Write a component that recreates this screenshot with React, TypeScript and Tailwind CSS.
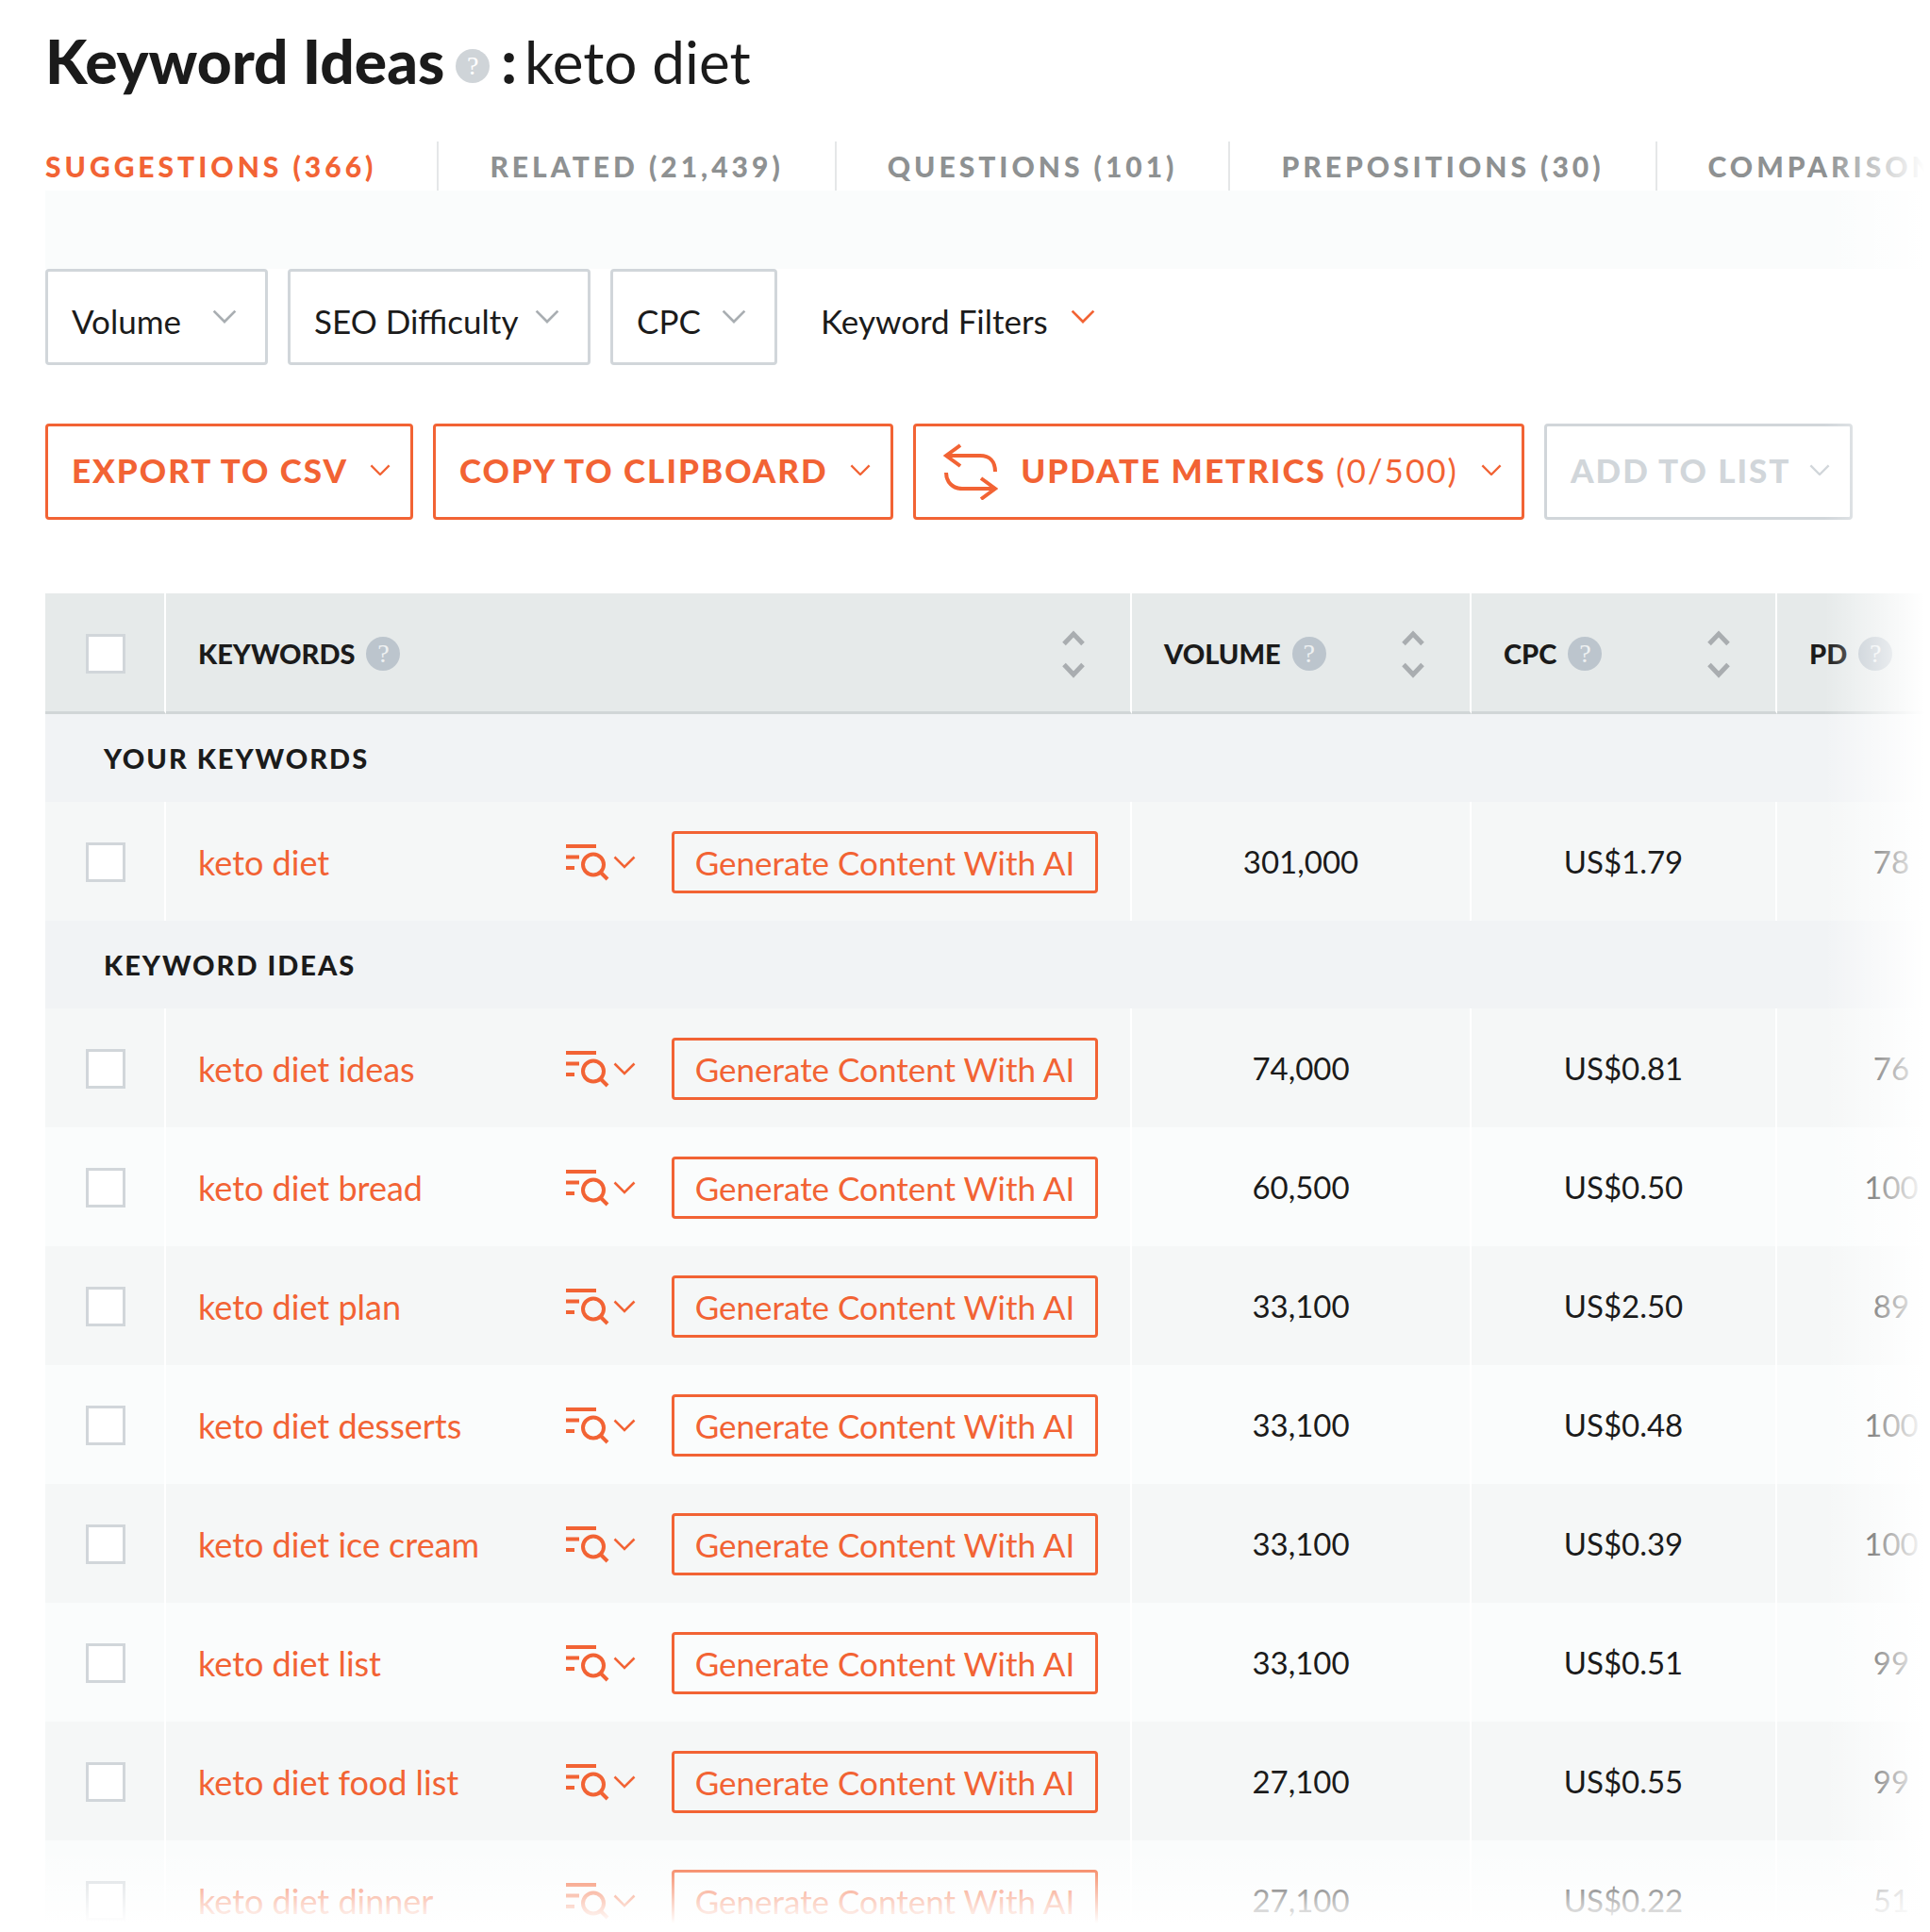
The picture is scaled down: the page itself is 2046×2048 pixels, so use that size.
import React, { useState } from 'react';

interface Keyword {
  keyword: string;
  volume: string;
  cpc: string;
  pd: number;
}

interface KeywordGroup {
  title: string;
  items: Keyword[];
}

const tabs = [
  'SUGGESTIONS (366)',
  'RELATED (21,439)',
  'QUESTIONS (101)',
  'PREPOSITIONS (30)',
  'COMPARISONS',
];

const filters = [
  { label: 'Volume', width: 'w-[236px]' },
  { label: 'SEO Difficulty', width: 'w-[321px]' },
  { label: 'CPC', width: 'w-[177px]' },
];

const groups: KeywordGroup[] = [
  {
    title: 'YOUR KEYWORDS',
    items: [{ keyword: 'keto diet', volume: '301,000', cpc: 'US$1.79', pd: 78 }],
  },
  {
    title: 'KEYWORD IDEAS',
    items: [
      { keyword: 'keto diet ideas', volume: '74,000', cpc: 'US$0.81', pd: 76 },
      { keyword: 'keto diet bread', volume: '60,500', cpc: 'US$0.50', pd: 100 },
      { keyword: 'keto diet plan', volume: '33,100', cpc: 'US$2.50', pd: 89 },
      { keyword: 'keto diet desserts', volume: '33,100', cpc: 'US$0.48', pd: 100 },
      { keyword: 'keto diet ice cream', volume: '33,100', cpc: 'US$0.39', pd: 100 },
      { keyword: 'keto diet list', volume: '33,100', cpc: 'US$0.51', pd: 99 },
      { keyword: 'keto diet food list', volume: '27,100', cpc: 'US$0.55', pd: 99 },
      { keyword: 'keto diet dinner', volume: '27,100', cpc: 'US$0.22', pd: 51 },
    ],
  },
];

const Chevron = ({ className = '' }: { className?: string }) => (
  <svg viewBox="0 0 24 14" fill="none" stroke="currentColor" strokeWidth="2.5" className={`shrink-0 ${className}`} aria-hidden="true">
    <path d="M1.5 1.5 12 12 22.5 1.5" />
  </svg>
);

const RefreshIcon = () => (
  <svg viewBox="0 0 58 60" fill="none" stroke="currentColor" strokeWidth="4" className="mt-1 ml-1 h-[60px] w-[58px] shrink-0" aria-hidden="true">
    <path d="M3 13h36c10 0 16 6 16 17" />
    <path d="M18 2 3 13l15 11" />
    <path d="M3 31c0 10 7 17 17 17h35" />
    <path d="M40 37l15 11-15 11" />
  </svg>
);

const SerpIcon = () => (
  <svg viewBox="0 0 46 40" fill="none" stroke="currentColor" strokeWidth="4" className="h-10 w-[46px] shrink-0" aria-hidden="true">
    <path d="M0 3h32M0 14.500h14M0 26h9" />
    <circle cx="29" cy="22.500" r="11" />
    <path d="M36.500 30.500 44 38" />
  </svg>
);

const SortIcon = () => (
  <svg viewBox="0 0 24 52" fill="none" stroke="currentColor" strokeWidth="5" className="h-[52px] w-6" aria-hidden="true">
    <path d="M2 15.500 12 5l10 10.500M2 37.500 12 48l10-10.500" />
  </svg>
);

const Help = ({ className = '' }: { className?: string }) => (
  <span className={`flex size-9 shrink-0 items-center justify-center rounded-full font-['Liberation_Serif',serif] text-[28px] leading-9 font-normal ${className}`}>
    ?
  </span>
);

const HeaderCell = ({ label, className = '' }: { label: string; className?: string }) => (
  <th scope="col" className={`border-r-2 border-white px-[34px] ${className}`}>
    <div className="flex items-center">
      <span className="text-[29px] font-black text-[#1b1b1b]">{label}</span>
      <Help className="ml-3 bg-[#bcc5cd] text-[#eef1f2]" />
      <button type="button" aria-label={`Sort by ${label}`} className="mr-3.5 ml-auto text-[#a9adb0]">
        <SortIcon />
      </button>
    </div>
  </th>
);

const Checkbox = ({ label }: { label: string }) => (
  <input
    type="checkbox"
    aria-label={label}
    className="mx-auto block size-[42px] appearance-none border-3 border-[#d1d6da] bg-white checked:bg-[#f26334]"
  />
);

const KeywordRow = ({ item, striped }: { item: Keyword; striped: boolean }) => (
  <tr className={`h-[126px] text-[33px] text-[#1b1b1b] [&>td]:pt-0.5 ${striped ? 'bg-[#f5f7f7]' : 'bg-[#fafcfc]'}`}>
    <td className="border-r-2 border-white pl-0.5">
      <Checkbox label={`Select ${item.keyword}`} />
    </td>
    <td className="border-r-2 border-white px-[34px]">
      <div className="flex items-center text-[#f26334]">
        <a href="#" className="text-[36px] leading-10">{item.keyword}</a>
        <button type="button" aria-label="Open search results" className="ml-auto flex items-center gap-1">
          <SerpIcon />
          <Chevron className="w-6" />
        </button>
        <button type="button" className="ml-[38px] h-[66px] w-[452px] rounded-sm border-3 text-[35px] leading-10">
          Generate Content With AI
        </button>
      </div>
    </td>
    <td className="border-r-2 border-white text-center">{item.volume}</td>
    <td className="border-r-2 border-white text-center">{item.cpc}</td>
    <td className="text-center">{item.pd}</td>
  </tr>
);

export default function App() {
  const [activeTab, setActiveTab] = useState(0);

  const actionClasses = 'flex h-[102px] items-center justify-between rounded-sm border-3 border-current pr-[21px] pb-1 pl-[25px] text-[35px] font-black tracking-[2px] whitespace-nowrap';

  return (
    <div className="relative h-screen overflow-hidden bg-white pl-12 font-[Lato,sans-serif] text-[#1b1b1b]">
      {/* Title */}
      <h1 className="flex h-[150px] items-center pb-5 text-[64px] whitespace-nowrap">
        <span className="font-black">Keyword Ideas</span>
        <Help className="mx-3 mt-2.5 bg-[#cfd4d8] text-white" />
        <span className="font-black">:</span>
        <span className="ml-2 text-[62px]">keto diet</span>
      </h1>

      {/* Tabs */}
      <nav className="flex h-[52px]">
        {tabs.map((tab, index) => (
          <button
            key={tab}
            type="button"
            onClick={() => setActiveTab(index)}
            className={`shrink-0 border-r-2 border-[#e5e7e8] px-[54px] text-[30px] leading-10 font-black tracking-[4px] whitespace-nowrap first:pr-16 first:pl-0 last:border-r-0 ${
              index === activeTab ? 'text-[#f26334]' : 'text-[#8e9192]'
            }`}
          >
            {tab}
          </button>
        ))}
      </nav>
      <div className="h-[83px] bg-[#fafcfc]" />

      {/* Filters */}
      <div className="flex gap-[21px] text-[35px]">
        {filters.map((filter) => (
          <button
            key={filter.label}
            type="button"
            className={`flex h-[102px] items-center justify-between rounded-sm border-3 border-[#d1d6da] pr-[30px] pl-[25px] whitespace-nowrap ${filter.width}`}
          >
            <span className="pt-2">{filter.label}</span>
            <Chevron className="w-[26px] text-[#a9aeb2]" />
          </button>
        ))}
        <button type="button" className="flex h-[102px] items-center gap-6 px-[25px]">
          <span className="pt-2">Keyword Filters</span>
          <Chevron className="w-[26px] text-[#f26334]" />
        </button>
      </div>

      {/* Actions */}
      <div className="mt-[62px] flex gap-[21px] text-[#f26334]">
        <button type="button" className={`w-[390px] ${actionClasses}`}>
          <span>EXPORT TO CSV</span>
          <Chevron className="w-[22px]" />
        </button>
        <button type="button" className={`w-[488px] ${actionClasses}`}>
          <span>COPY TO CLIPBOARD</span>
          <Chevron className="w-[22px]" />
        </button>
        <button type="button" className={`w-[648px] ${actionClasses}`}>
          <RefreshIcon />
          <span>
            UPDATE METRICS <span className="font-normal">(0/500)</span>
          </span>
          <Chevron className="w-[22px]" />
        </button>
        <button type="button" disabled className={`w-[327px] text-[#d1d6da] ${actionClasses}`}>
          <span>ADD TO LIST</span>
          <Chevron className="w-[22px]" />
        </button>
      </div>

      {/* Keyword table, wider than the page so the last column runs off the edge */}
      <table className="mt-[78px] w-[calc(100%+80px)] table-fixed border-separate border-spacing-0">
        <thead>
          <tr className="h-[128px] bg-[#e6eaea] text-left [&>th]:border-b-3 [&>th]:border-b-[#d1d6d7] [&>th]:pt-0.5">
            <th scope="col" className="w-32 border-r-2 border-white pl-0.5">
              <Checkbox label="Select all keywords" />
            </th>
            <HeaderCell label="KEYWORDS" />
            <HeaderCell label="VOLUME" className="w-[360px]" />
            <HeaderCell label="CPC" className="w-[324px]" />
            <HeaderCell label="PD" className="w-[242px]" />
          </tr>
        </thead>
        {groups.map((group) => (
          <tbody key={group.title}>
            <tr className="h-[93px] bg-[#f1f3f5]">
              <th scope="rowgroup" colSpan={5} className="pl-[62px] text-left text-[29px] font-black tracking-[2px]">
                {group.title}
              </th>
            </tr>
            {group.items.map((item, index) => (
              <KeywordRow key={item.keyword} item={item} striped={index % 2 === 0} />
            ))}
          </tbody>
        ))}
      </table>

      {/* Edge fades */}
      <div className="pointer-events-none absolute inset-y-0 right-0 w-[112px] bg-linear-to-r from-transparent to-white to-95%" />
      <div className="pointer-events-none absolute inset-x-0 bottom-0 h-[90px] bg-linear-to-b from-transparent to-white to-90%" />
    </div>
  );
}
